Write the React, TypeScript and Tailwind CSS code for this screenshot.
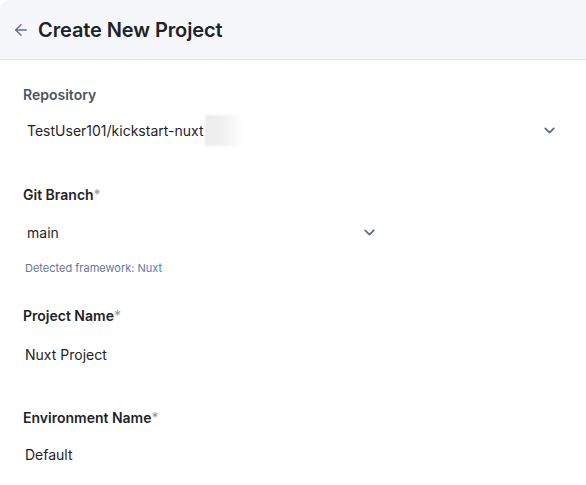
import { ArrowLeft, ChevronDown } from 'lucide-react';

function Label({ text, required, muted }: { text: string; required?: boolean; muted?: boolean }) {
  return (
    <div className={`text-[14px] font-semibold ${muted ? 'text-[#4b5563]' : 'text-[#1f2328]'}`}>
      {text}
      {required && <span className="font-normal text-[#94979e]">*</span>}
    </div>
  );
}

function SelectField({ value, width, blur }: { value: string; width: string; blur?: boolean }) {
  return (
    <div className={`flex items-center justify-between h-[36px] pl-1 pr-[4px] ${width}`}>
      <div className="flex items-center text-[14px] text-[#1f2328]">
        {value}
        {blur && <span className="ml-px inline-block h-[31px] w-[38px] bg-gradient-to-r from-[#ececec] via-[#f1f1f1] to-white blur-[1px]" />}
      </div>
      <ChevronDown size={17} strokeWidth={2.5} className="text-[#5b6b8c]" />
    </div>
  );
}

export default function App() {
  return (
    <div className="min-h-[485px] w-[586px] bg-white overflow-hidden" style={{ fontFamily: 'Inter, "Noto Sans", sans-serif' }}>
      <header className="flex h-[60px] items-center gap-[8px] border-b border-[#dfe3ea] bg-[#f5f7fb] pl-[12px] rounded-tl-[10px]">
        <ArrowLeft size={18} strokeWidth={1.8} className="text-[#5d6f96]" />
        <h1 className="text-[20px] font-semibold tracking-[-0.1px] text-[#1f2328]">Create New Project</h1>
      </header>

      <main className="flex flex-col px-[23px] pt-[24px]">
        <Label text="Repository" muted />
        <div className="mt-[7px]">
          <SelectField value="TestUser101/kickstart-nuxt" width="w-[539px]" blur />
        </div>

        <div className="mt-[36px]">
          <Label text="Git Branch" required />
        </div>
        <div className="mt-[9px]">
          <SelectField value="main" width="w-[359px]" />
        </div>
        <p className="mt-[10px] pl-[2px] text-[11px] text-[#64789c]">Detected framework: Nuxt</p>

        <div className="mt-[28px]">
          <Label text="Project Name" required />
        </div>
        <div className="mt-[11px] flex h-[36px] items-center pl-[2px] text-[14px] text-[#1f2328]">Nuxt Project</div>

        <div className="mt-[34px]">
          <Label text="Environment Name" required />
        </div>
        <div className="mt-[9px] flex h-[36px] items-center pl-[2px] text-[14px] text-[#1f2328]">Default</div>
      </main>
    </div>
  );
}
